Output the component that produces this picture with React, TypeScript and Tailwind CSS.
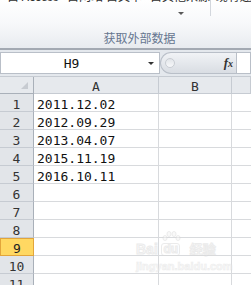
import React from "react";

type Row = { n: number; a?: string };

const rows: Row[] = [
  { n: 1, a: "2011.12.02" },
  { n: 2, a: "2012.09.29" },
  { n: 3, a: "2013.04.07" },
  { n: 4, a: "2015.11.19" },
  { n: 5, a: "2016.10.11" },
  { n: 6 },
  { n: 7 },
  { n: 8 },
  { n: 9 },
  { n: 10 },
  { n: 11 },
];

const cjk = "font-['Noto_Sans_CJK_SC',sans-serif]";

function Ribbon() {
  return (
    <div className="h-[50px] border-b-2 border-[#a3a9b2] bg-gradient-to-b from-white via-[#f7f8fa] to-[#e8ebef]">
      <div className="flex h-[16px]">
        <div className="w-[217px] flex flex-col">
          {/* bottoms of the button captions above, cut by the crop */}
          <div className={`h-[4px] overflow-hidden text-[12px] leading-[12px] text-[#2f2f2f] ${cjk}`}>
            <div className="-mt-[10px] flex pl-[7px] whitespace-nowrap">
              <span className="w-[60px]">自 Access</span>
              <span className="w-[36px]">自网站</span>
              <span className="w-[47px] pl-[3px]">自文本</span>
              <span>自其他来源</span>
            </div>
          </div>
          <div className="ml-[178px] mt-[8px] w-0 h-0 border-x-[3px] border-x-transparent border-t-[3px] border-t-[#595959]" />
        </div>
        <div className="w-px h-[16px] bg-[#d3d7dd]" />
        <div className={`h-[4px] overflow-hidden text-[12px] leading-[12px] text-[#2f2f2f] ${cjk}`}>
          <div className="-mt-[10px] pl-[5px] whitespace-nowrap">现有连接</div>
        </div>
      </div>
      <div className={`w-[217px] pl-[62px] mt-[16px] text-center text-[12px] leading-[12px] text-[#66768f] ${cjk}`}>
        获取外部数据
      </div>
    </div>
  );
}

function FormulaBar() {
  return (
    <div className="h-[26px] bg-[#e4e8ed] pt-[2px] flex font-['DejaVu_Sans_Mono',monospace]">
      <div className="w-[160px] h-[22px] border border-[#b9bfc8] bg-white flex items-center">
        <span className="flex-1 text-center text-[13px] leading-[13px] pt-[1px] text-[#111]">H9</span>
        <span className="w-[17px] flex justify-center">
          <span className="w-0 h-0 border-x-[3px] border-x-transparent border-t-[3px] border-t-[#333]" />
        </span>
      </div>
      <div className="w-[77px] h-[22px] rounded-l-full border border-r-0 border-[#b9bfc8] bg-gradient-to-b from-[#f1f3f6] to-[#d9dde3] flex items-center">
        <span className="ml-[4px] w-[10px] h-[10px] rounded-full border border-[#c9cdd3] bg-gradient-to-b from-[#e2e5e9] to-[#f7f8fa]" />
        <span className="ml-auto mr-[3px] font-['Liberation_Serif',serif] italic font-bold text-[13px] leading-[13px] text-[#333]">
          f<span className="text-[10px]">x</span>
        </span>
        <span className="w-px h-[20px] bg-[#b9bfc8]" />
      </div>
      <div className="flex-1 h-[22px] border border-l-0 border-[#b9bfc8] bg-white" />
    </div>
  );
}

function Grid() {
  return (
    <div className="font-['DejaVu_Sans_Mono',monospace] text-[13px]">
      <div className="grid grid-cols-[34px_125px_73px_1fr] h-[18px] border-t border-[#c6cbd2]">
        <div className="border-r border-b border-[#a9b0b9] bg-[#e6e9ed] flex justify-end items-end pr-[5px] pb-[4px]">
          <svg width="7" height="7" viewBox="0 0 7 7">
            <polygon points="7,0 7,7 0,7" fill="#c7cbd1" />
          </svg>
        </div>
        {["A", "B", ""].map((c, i) => (
          <div
            key={i}
            className="border-r border-b border-[#c6cbd2] bg-[#e6e9ed] text-center leading-[13px] pt-[3px] text-[#333]"
          >
            {c}
          </div>
        ))}
      </div>
      {rows.map((r) => {
        const sel = r.n === 9;
        return (
          <div key={r.n} className="grid grid-cols-[34px_125px_73px_1fr] h-[18px]">
            <div
              className={
                sel
                  ? "border border-[#e2a53b] bg-[#ffd862] text-center leading-[13px] pt-[3px] text-[#222]"
                  : "border-r border-b border-r-[#a9b0b9] border-b-[#c6cbd2] bg-[#e2e5e9] text-center leading-[13px] pt-[4px] text-[#333]"
              }
            >
              {r.n}
            </div>
            <div className="border-r border-b border-[#d8dadd] pl-[3px] leading-[13px] pt-[4px] text-[#111]">
              {r.a}
            </div>
            <div className="border-r border-b border-[#d8dadd]" />
            <div className="border-b border-[#d8dadd]" />
          </div>
        );
      })}
    </div>
  );
}

function Watermark() {
  return (
    <div className="absolute left-[136px] top-[231px] w-[90px] flex flex-col items-start opacity-50 pointer-events-none">
      <div className="flex items-end gap-[3px] font-['Liberation_Sans',sans-serif] font-bold text-[14px] leading-[14px] text-[#f4f4f4] [-webkit-text-stroke:1px_#d9d9d9]">
        <span className="mb-[2px]">Bai</span>
        <span className="flex flex-col items-center">
          <svg width="20" height="12" viewBox="0 0 20 12">
            <g fill="#f4f4f4" stroke="#d9d9d9" strokeWidth="1">
              <ellipse cx="4" cy="7" rx="2" ry="2.5" />
              <ellipse cx="8" cy="3" rx="2" ry="2.5" />
              <ellipse cx="13" cy="3" rx="2" ry="2.5" />
              <ellipse cx="17" cy="7" rx="2" ry="2.5" />
            </g>
          </svg>
          <span className="rounded-[3px] border border-[#d9d9d9] px-[1px] text-[12px] leading-[11px] mb-[2px]">du</span>
        </span>
        <span className={`${cjk} text-[13px] mb-[2px] ml-[6px]`}>经验</span>
      </div>
      <div className="mt-[3px] font-['Liberation_Sans',sans-serif] font-bold text-[11px] leading-[11px] text-[#f2f2f2] [-webkit-text-stroke:0.6px_#dcdcdc]">
        jingyan.baidu.com
      </div>
    </div>
  );
}

export default function App() {
  return (
    <div className="relative w-[251px] h-[285px] overflow-hidden bg-white">
      <Ribbon />
      <FormulaBar />
      <Grid />
      <Watermark />
    </div>
  );
}
